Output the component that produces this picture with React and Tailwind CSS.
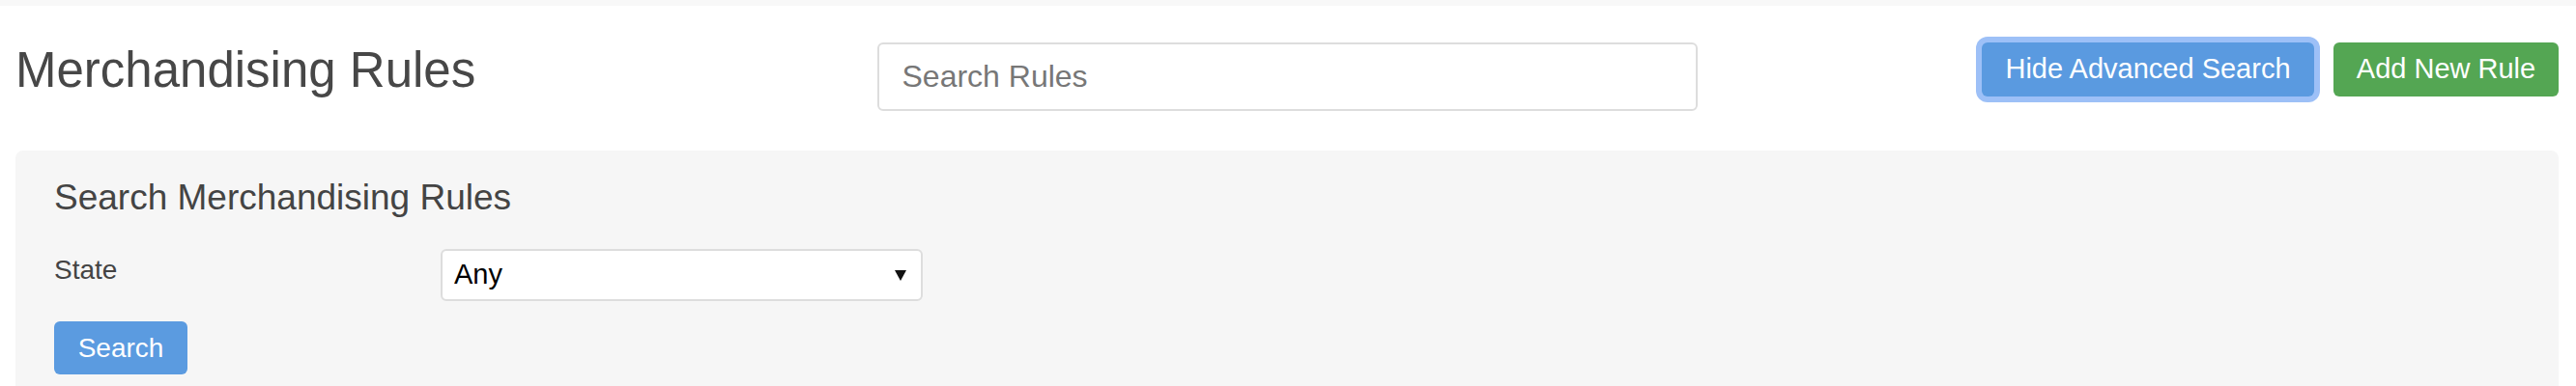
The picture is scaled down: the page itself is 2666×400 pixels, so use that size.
import React from 'react';

function ActionButtons() {
  return (
    <div className="flex-1 flex justify-end gap-[20px]">
      {/* focused state keeps the light blue ring */}
      <button className="h-[56px] w-[344px] rounded-[6px] bg-[#5a9ae0] text-[29px] text-white shadow-[0_0_0_6px_#9dc0f7]">
        Hide Advanced Search
      </button>
      <button className="h-[56px] w-[233px] rounded-[6px] bg-[#54a653] text-[29px] text-white">
        Add New Rule
      </button>
    </div>
  );
}

function AdvancedSearch() {
  return (
    <section className="mt-[41px] rounded-[8px] bg-[#f6f6f6] pl-[40px] pt-[29px] pb-[40px]">
      <h3 className="text-[37px] leading-[40px] text-[#444]">Search Merchandising Rules</h3>

      <div className="mt-[33px] flex items-start">
        <label className="mt-[2px] w-[400px] text-[28px] leading-[40px] text-[#444]">State</label>
        <div className="relative w-[499px]">
          <select className="h-[54px] w-full appearance-none rounded-[6px] border-2 border-[#dddddd] bg-white pl-[12px] text-[29px] text-black outline-none">
            <option>Any</option>
            <option>Active</option>
            <option>Inactive</option>
          </select>
          <svg className="pointer-events-none absolute right-[17px] top-[22px]" width="12" height="11" viewBox="0 0 12 11">
            <polygon points="0,0 12,0 6,11" fill="#111" />
          </svg>
        </div>
      </div>

      <button className="mt-[21px] h-[55px] w-[138px] rounded-[6px] bg-[#5b9be0] text-[28px] text-white">
        Search
      </button>
    </section>
  );
}

export default function App() {
  return (
    <div className="min-h-screen bg-white font-['Liberation_Sans',Arial,sans-serif]">
      <div className="h-[6px] bg-[#f8f8f8]" />
      <div className="pl-4 pr-[18px]">
        {/* Page header */}
        <header className="flex items-start pt-[38px]">
          <div className="flex-1 min-w-0">
            <h1 className="mt-[1px] text-[51px] leading-[56px] text-[#474747]">Merchandising Rules</h1>
          </div>
          <input
            type="text"
            placeholder="Search Rules"
            className="h-[71px] w-[849px] rounded-[6px] border-2 border-[#dddddd] bg-white pl-[24px] text-[32px] text-[#333] outline-none placeholder:text-[#777]"
          />
          <ActionButtons />
        </header>

        <AdvancedSearch />
      </div>
    </div>
  );
}
